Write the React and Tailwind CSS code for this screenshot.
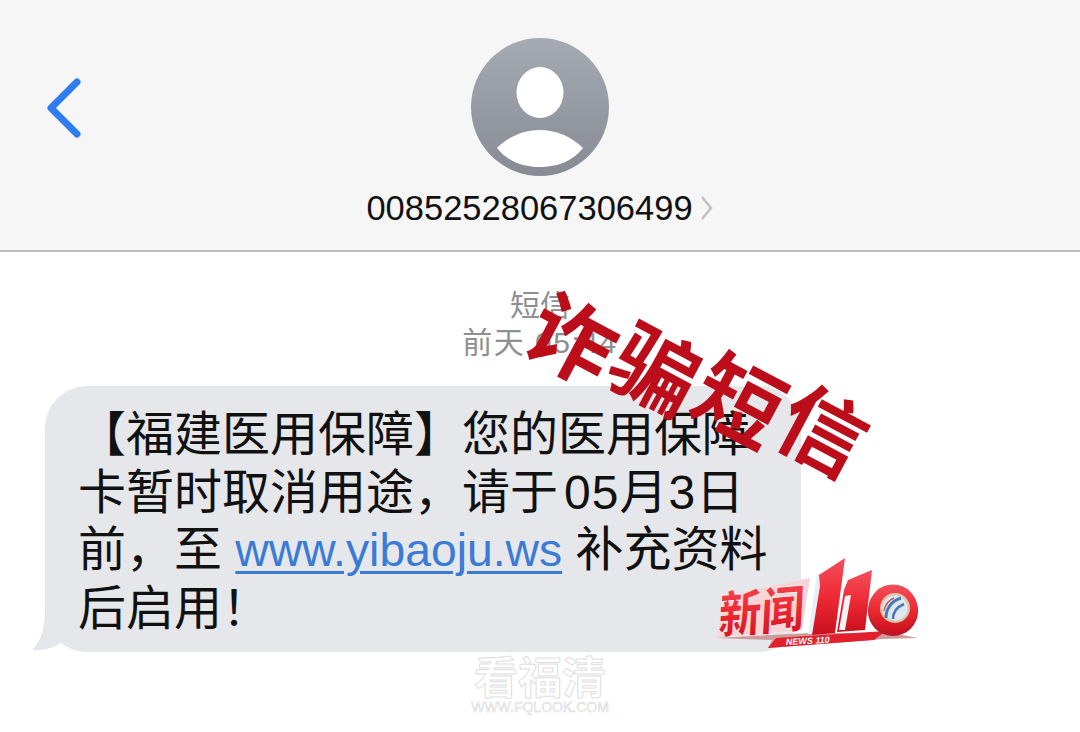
// SMS screenshot: conversation header, one grey bubble, and the overlays stamped on top.
const cjkSans = 'font-["Liberation_Sans","Noto_Sans_CJK_SC",sans-serif]';

function Avatar() {
  return (
    <svg width="138" height="138" viewBox="0 0 138 138">
      <defs>
        <linearGradient id="avatarFill" x1="0" y1="0" x2="0" y2="1">
          <stop offset="0" stopColor="#a6aab3" />
          <stop offset="1" stopColor="#888b94" />
        </linearGradient>
      </defs>
      <circle cx="69" cy="69" r="69" fill="url(#avatarFill)" />
      <ellipse cx="69" cy="54.5" rx="23.5" ry="25.5" fill="#fff" />
      <path d="M26 110 C38 98 54 92 69 92 C84 92 100 98 112 110 C102 123 86 129 69 129 C52 129 36 123 26 110 Z" fill="#fff" />
    </svg>
  );
}

function NewsLogo() {
  return (
    <svg width="206" height="96" viewBox="0 0 206 96" className="absolute left-[714px] top-[554px]">
      <defs>
        <linearGradient id="logoRed" x1="0" y1="0" x2="0" y2="1">
          <stop offset="0" stopColor="#f2505a" />
          <stop offset="0.5" stopColor="#ee2a35" />
          <stop offset="1" stopColor="#c8101c" />
        </linearGradient>
      </defs>
      {/* base ribbon */}
      <path d="M1 84 L96 79 L178 79 L204 84 L170 85 L54 94 L58 86 Z" fill="#cf9a9c" />
      <path d="M62 84 L172 77 L160 86 L54 94 Z" fill="#e2202c" />
      <text x="72" y="91" fontSize="9" fontWeight="700" fontStyle="italic" fill="#fff" fontFamily="Liberation Sans, sans-serif" transform="rotate(-3 72 91)">NEWS 110</text>
      {/* 新闻 block */}
      <path d="M13 41 L96 24 L88 76 L3 83 Z" fill="#f7d5d6" />
      <text x="4" y="80" fontSize="50" fontWeight="900" fontFamily="Noto Sans CJK SC, sans-serif" fill="url(#logoRed)" stroke="#fff" strokeWidth="0.6" textLength="86" lengthAdjust="spacingAndGlyphs" transform="rotate(-5 4 80) skewX(-8) translate(11 0)">新闻</text>
      {/* the two 1s */}
      <path d="M103 20 L94 80 L100 80 L109 18 Z" fill="#e8eef6" />
      <path d="M105 21 L131 4 L121 79 L98 81 L106 32 Z" fill="url(#logoRed)" />
      <path d="M134 26 L158 16 L151 76 L123 78 L130 36 Z" fill="url(#logoRed)" />
      <path d="M131 42 L137 41 L131 76 L125 76 Z" fill="#f1f3f7" />
      {/* the 0 with the blue swirl */}
      <circle cx="179" cy="57" r="25" fill="#b5182a" />
      <circle cx="179" cy="55" r="24.5" fill="url(#logoRed)" />
      <circle cx="181" cy="54" r="15" fill="#d9c9a8" />
      <circle cx="181" cy="54" r="12.5" fill="#dfe8f2" />
      <path d="M172 64 C172 55 177 47 187 44" fill="none" stroke="#4a78b0" strokeWidth="3" />
      <path d="M179 65 C179 58 183 53 190 50" fill="none" stroke="#4a78b0" strokeWidth="2.5" />
      <path d="M170 57 C171 51 175 46 180 44" fill="none" stroke="#c9545c" strokeWidth="1.5" />
    </svg>
  );
}

export default function App() {
  return (
    <div className={`relative w-[1080px] h-[732px] overflow-hidden bg-white ${cjkSans}`}>
      {/* Header */}
      <div className="relative h-[252px] bg-[#f6f6f6] border-b-2 border-[#bdbdbd] flex flex-col items-center pt-[38px]">
        <svg width="40" height="64" viewBox="0 0 40 64" fill="none" className="absolute left-[44px] top-[76px]">
          <path d="M33 6 L7 32 L33 58" stroke="#2f7cf0" strokeWidth="7" strokeLinecap="round" strokeLinejoin="round" />
        </svg>
        <Avatar />
        <div className="flex items-center gap-[7px] mt-[11px] text-[34.5px] leading-[42px] text-[#111]">
          <span>00852528067306499</span>
          <svg width="14" height="28" viewBox="0 0 14 28" fill="none">
            <path d="M2 3 L11 14 L2 25" stroke="#c3c3c6" strokeWidth="2.5" />
          </svg>
        </div>
      </div>

      {/* Message meta */}
      <div className="flex flex-col items-center pt-[35px] text-[#8e8e93] text-[30px] leading-[37px]">
        <span>短信</span>
        <span className="tracking-[1.5px]">前天 05:44</span>
      </div>

      {/* Bubble */}
      <div className="relative ml-[45px] mt-[25px] w-[756px] h-[266px] rounded-[42px] bg-[#e6e7ea] pl-[33px] pt-[20px] text-[48px] leading-[57.5px] text-[#111]">
        <svg width="60" height="50" viewBox="0 0 60 50" className="absolute left-[-15px] bottom-0">
          <path d="M15 4 C15 26 12 38 2 48 C12 49 24 46 32 40 C38 45 48 50 60 50 L60 4 Z" fill="#e6e7ea" />
        </svg>
        <div className="relative">
          <div>【福建医用保障】您的医用保障</div>
          <div>
            卡暂时取消用途，请于<span className="ml-[6px] tracking-[1px]">05月3日</span>
          </div>
          <div>
            前，至 <span className="text-[46.3px] text-[#3a7bd5] underline underline-offset-[5px] decoration-[3px]">www.yibaoju.ws</span> 补充资料
          </div>
          <div>后启用！</div>
        </div>
      </div>

      {/* Overlays stamped on the picture */}
      <div className="absolute left-[700px] top-[381px] -translate-x-1/2 -translate-y-1/2 rotate-[20deg] flex gap-[3px] whitespace-nowrap text-[86px] leading-none font-bold text-[#bc0e1a] font-['Noto_Sans_CJK_SC',sans-serif]">
        <span className="rotate-[8deg]">诈</span>
        <span className="rotate-[8deg]">骗</span>
        <span className="rotate-[8deg]">短</span>
        <span className="rotate-[8deg]">信</span>
      </div>
      <NewsLogo />
      <div className="absolute left-[473px] top-[650px] w-[134px] flex flex-col items-center whitespace-nowrap text-white">
        <span className="text-[44px] leading-[50px] font-bold [-webkit-text-stroke:1px_#e0e0e0] font-['Noto_Sans_CJK_SC',sans-serif]">看福清</span>
        <span className="text-[14px] leading-[14px] [-webkit-text-stroke:0.5px_#d2d2d2] font-['Liberation_Sans',sans-serif]">WWW.FQLOOK.COM</span>
      </div>
    </div>
  );
}
